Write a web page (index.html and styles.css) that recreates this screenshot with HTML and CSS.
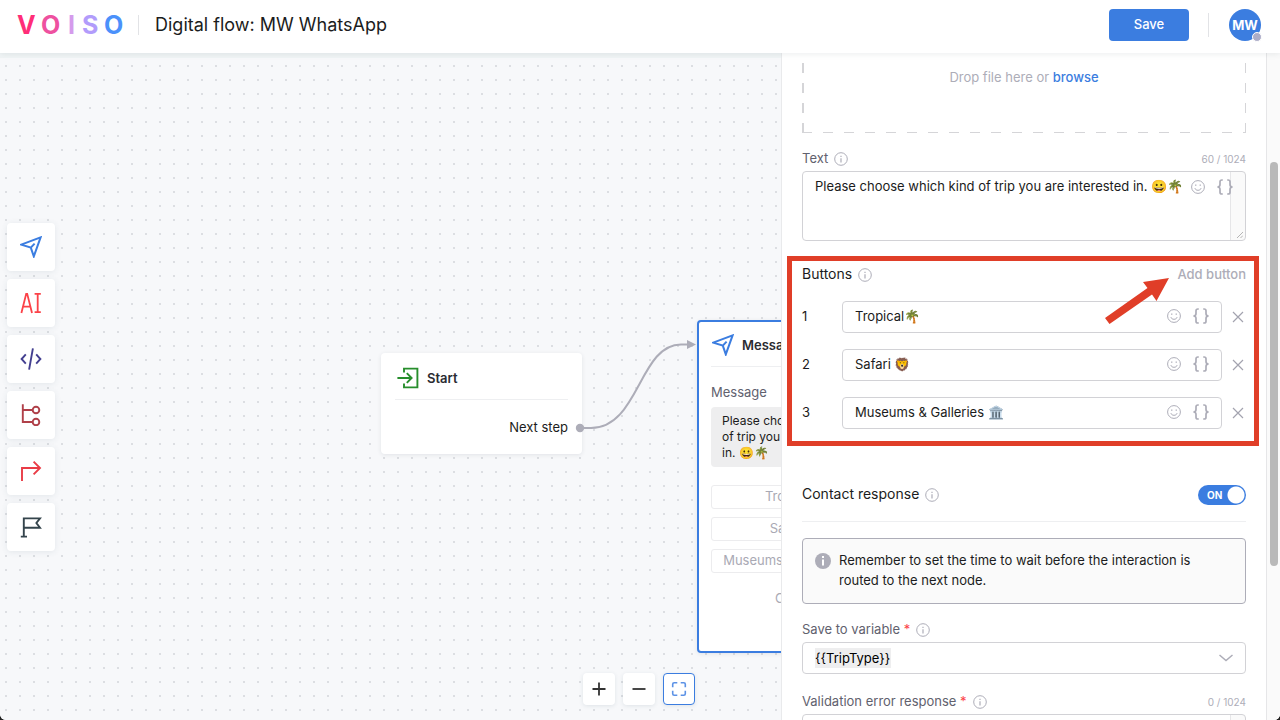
FILE: index.html
```html
<!DOCTYPE html>
<html lang="en">
<head>
<meta charset="utf-8">
<title>Digital flow: MW WhatsApp</title>
<link rel="stylesheet" href="styles.css">
</head>
<body>
<svg class="defs" aria-hidden="true">
  <symbol id="plane" viewBox="0 0 22 22"><path d="M1.2 8.6 20.6 1.4 13.8 20.4 10.8 11.6Z M10.8 11.6 14.6 7.6" fill="none" stroke="#3b7de0" stroke-width="2"/></symbol>
  <symbol id="info" viewBox="0 0 14 14"><circle cx="7" cy="7" r="6.3" fill="none" stroke="#adadb8"/><path d="M7 6.2V10.4M7 3.8V5" stroke="#adadb8" stroke-width="1.2"/></symbol>
  <symbol id="smile" viewBox="0 0 14 14"><g fill="none" stroke="#adadb8"><circle cx="7" cy="7" r="6.4"/><path d="M3.9 8.2C4.6 11 9.4 11 10.1 8.2M4.8 4.4V6M9.2 4.4V6"/></g></symbol>
  <symbol id="braces" viewBox="0 0 16 16"><path d="M5.8 1H4.9Q3 1 3 2.8V5.6Q3 8 .4 8Q3 8 3 10.400V13.200Q3 15 4.900 15H5.800M10.200 1H11.100Q13 1 13 2.800V5.600Q13 8 15.600 8Q13 8 13 10.400V13.200Q13 15 11.100 15H10.200" fill="none" stroke="#adadb8" stroke-width="1.7"/></symbol>
  <symbol id="cross" viewBox="0 0 12 12"><path d="M1 1 11 11M11 1 1 11" stroke="#a3a3af" stroke-width="1.2"/></symbol>
</svg>
<div class="app">
  <header class="topbar">
    <svg class="logo" viewBox="0 0 108 32" role="img" aria-label="Voiso">
      <text class="logo-text" y="25"><tspan x="0" fill="#ff2e78">V</tspan><tspan x="24" fill="#ee51a0">O</tspan><tspan x="51" fill="#d59bec">I</tspan><tspan x="65" fill="#b29cfb">S</tspan><tspan x="87" fill="#4b91fb">O</tspan></text>
    </svg>
    <h1 class="title">Digital flow: MW WhatsApp</h1>
    <button class="save" type="button">Save</button>
    <div class="account"><div class="avatar">MW<span class="status"></span></div></div>
  </header>
  <main class="work">
    <section class="canvas" aria-label="Flow">
      <nav class="tools">
        <button class="tool" type="button" aria-label="Message"><svg width="22" height="22"><use href="#plane"/></svg></button>
        <button class="tool" type="button" aria-label="AI"><svg width="22" height="22" viewBox="0 0 22 22" fill="none" stroke="#fb4248" stroke-width="1.8"><path d="M1.4 21 6.2 1.8H7.2L12 21M3 14.6H10.4M14.6 1.8H20.8M14.6 20.2H20.8M17.7 1.8V20.2"/></svg></button>
        <button class="tool" type="button" aria-label="Code"><svg width="22" height="22" viewBox="0 0 22 22" fill="none" stroke="#433f90" stroke-width="1.9"><path d="M5.8 6.4 1.6 11 5.8 15.6M16.2 6.4 20.4 11 16.2 15.6M12.9 .4 9.1 21.6"/></svg></button>
        <button class="tool" type="button" aria-label="Branch"><svg width="22" height="22" viewBox="0 0 22 22" fill="none" stroke="#b04049" stroke-width="1.9"><path d="M2.8 .2V18H12.6M2.8 6H12.6"/><circle cx="16" cy="6" r="3.3"/><circle cx="16" cy="18" r="3.3"/></svg></button>
        <button class="tool" type="button" aria-label="Redirect"><svg width="22" height="22" viewBox="0 0 22 22" fill="none" stroke="#e93c46" stroke-width="1.9"><path d="M2 21V8H20M13.6 1.6 20 8 13.6 14.4"/></svg></button>
        <button class="tool" type="button" aria-label="End"><svg width="22" height="22" viewBox="0 0 22 22" fill="none" stroke="#34444c" stroke-width="1.9"><path d="M.8 20.6H7M3.8 20.6V2.4H20L16.4 7 20 11.8H3.8"/></svg></button>
      </nav>
      <article class="node start">
        <h2 class="node-title"><svg width="22" height="22" viewBox="0 0 22 22" fill="none" stroke="#278e2c" stroke-width="1.9"><path d="M7 5.6V1.6H20.4V20.4H7V16.4M.4 11H14.6M9.8 6.2 14.6 11 9.8 15.8"/></svg>Start</h2>
        <p class="next">Next step</p>
      </article>
      <svg class="edge" width="124" height="98" viewBox="0 0 124 98"><circle cx="7" cy="89" r="4.2" fill="#adadb8"/><path d="M7 89H18C66 89 66 5.500 108 5.500H116" fill="none" stroke="#adadb8" stroke-width="2"/><path d="M114 1 123 5.500 114 10Z" fill="#adadb8"/></svg>
      <article class="node message">
        <h2 class="node-title"><svg width="22" height="22"><use href="#plane"/></svg>Message</h2>
        <p class="caption">Message</p>
        <p class="bubble">Please choose which kind<br>of trip you are interested<br>in. 😀🌴</p>
        <div class="options"><span class="option">Tropical🌴</span><span class="option">Safari 🦁</span><span class="option">Museums &amp; Galleries 🏛️</span></div>
        <p class="reply">Contact response</p>
      </article>
      <div class="zoom">
        <button class="zoom-btn" type="button" aria-label="Zoom in"><svg width="14" height="14" viewBox="0 0 14 14" stroke="#333" stroke-width="1.8"><path d="M7 .5V13.500M.5 7H13.500"/></svg></button>
        <button class="zoom-btn" type="button" aria-label="Zoom out"><svg width="14" height="14" viewBox="0 0 14 14" stroke="#333" stroke-width="1.8"><path d="M.5 7H13.500"/></svg></button>
        <button class="zoom-btn fit" type="button" aria-label="Fit"><svg width="16" height="16" viewBox="0 0 16 16" fill="none" stroke="#5c92e6" stroke-width="1.6"><path d="M1.700 6.300V3.200Q1.700 1.700 3.200 1.700H6.300M9.700 1.700H12.800Q14.300 1.700 14.300 3.200V6.300M14.300 9.700V12.800Q14.300 14.300 12.800 14.300H9.700M6.300 14.300H3.200Q1.700 14.300 1.700 12.800V9.700"/></svg></button>
      </div>
    </section>
    <aside class="panel">
      <form class="form">
        <div class="drop">Drop file here or <a class="browse" href="#">browse</a></div>
        <div class="label-row"><label for="text">Text</label><svg class="info"><use href="#info"/></svg><span class="count">60 / 1024</span></div>
        <div class="area"><textarea id="text">Please choose which kind of trip you are interested in. 😀🌴</textarea><span class="area-tools"><svg width="14" height="14"><use href="#smile"/></svg><svg width="16" height="16"><use href="#braces"/></svg></span><svg class="grip" width="6" height="6" viewBox="0 0 6 6"><path d="M0 6 6 0M3.500 6 6 3.500" stroke="#b5b5b5"/></svg></div>
        <section class="buttons">
          <div class="head"><h3>Buttons</h3><svg class="info"><use href="#info"/></svg><button class="add" type="button">Add button</button></div>
          <div class="button-row"><label for="b1">1</label><div class="field"><input id="b1" value="Tropical🌴"><svg width="14" height="14"><use href="#smile"/></svg><svg width="16" height="16"><use href="#braces"/></svg></div><button class="remove" type="button" aria-label="Remove 1"><svg width="12" height="12"><use href="#cross"/></svg></button></div>
          <div class="button-row"><label for="b2">2</label><div class="field"><input id="b2" value="Safari 🦁"><svg width="14" height="14"><use href="#smile"/></svg><svg width="16" height="16"><use href="#braces"/></svg></div><button class="remove" type="button" aria-label="Remove 2"><svg width="12" height="12"><use href="#cross"/></svg></button></div>
          <div class="button-row"><label for="b3">3</label><div class="field"><input id="b3" value="Museums &amp; Galleries 🏛️"><svg width="14" height="14"><use href="#smile"/></svg><svg width="16" height="16"><use href="#braces"/></svg></div><button class="remove" type="button" aria-label="Remove 3"><svg width="12" height="12"><use href="#cross"/></svg></button></div>
          <div class="highlight"></div>
          <svg class="pointer" width="66" height="48" viewBox="0 0 66 48"><path d="M64 0 38 4 42.500 10 0 40 4.500 46 47 16.500 51.500 23Z" fill="#e03e28"/></svg>
        </section>
        <div class="contact"><label for="contact">Contact response</label><svg class="info"><use href="#info"/></svg><span class="switch"><input id="contact" type="checkbox" role="switch" checked><span class="switch-text">ON</span></span></div>
        <div class="note"><svg width="16" height="16" viewBox="0 0 16 16"><circle cx="8" cy="8" r="8" fill="#adadb8"/><path d="M8 6.500V12.500M8 3V5" stroke="#fff" stroke-width="2"/></svg><p>Remember to set the time to wait before the interaction is routed to the next node.</p></div>
        <div class="label-row"><label for="variable">Save to variable <span class="req">*</span></label><svg class="info"><use href="#info"/></svg></div>
        <div class="select"><select id="variable"><option>{{TripType}}</option></select><svg width="14" height="8" viewBox="0 0 14 8"><path d="M.5 1 7 6.500 13.500 1" fill="none" stroke="#adadb8" stroke-width="1.5"/></svg></div>
        <div class="label-row"><label for="error">Validation error response <span class="req">*</span></label><svg class="info"><use href="#info"/></svg><span class="count">0 / 1024</span></div>
        <div class="area"><textarea id="error"></textarea></div>
      </form>
      <div class="track"><div class="thumb"></div></div>
    </aside>
  </main>
</div>
</body>
</html>
```
FILE: styles.css
```css
* { box-sizing: border-box; margin: 0; }
body { background: #222; color: #1b1c20; font: 13px/20px Inter, "Noto Sans", sans-serif; }
button, input, textarea, select { font: inherit; color: inherit; padding: 0; border: 0; background: none; }
svg { display: block; flex: none; }
.defs { position: absolute; width: 0; height: 0; }
.app { height: 100vh; display: flex; flex-direction: column; overflow: hidden; border-radius: 0 0 6px 6px; background: #fff; }

.topbar { position: relative; z-index: 1; flex: none; height: 53px; display: flex; align-items: center; padding: 0 19px 3px 17px; background: #fff; box-shadow: 0 1px 6px rgba(60, 80, 90, .1); }
.logo { width: 108px; height: 32px; overflow: visible; }
.logo-text { font: 700 25px Inter, sans-serif; }
.title { flex: 1; margin-left: 13px; padding-left: 16px; border-left: 1px solid #e2e3e6; font-size: 18px; font-weight: 400; line-height: 20px; }
.save { width: 80px; height: 32px; padding-bottom: 2px; border-radius: 4px; background: #3b7de0; color: #fff; font-weight: 500; }
.account { margin-left: 19px; padding-left: 20px; border-left: 1px solid #e2e3e6; height: 24px; display: flex; align-items: center; }
.avatar { position: relative; width: 32px; height: 32px; border-radius: 50%; background: #3b7de0; color: #fff; font-size: 13px; font-weight: 700; line-height: 32px; text-align: center; }
.status { position: absolute; right: -1px; bottom: -1px; width: 10px; height: 10px; border: 1px solid #fff; border-radius: 50%; background: #adadc8; }

.work { flex: 1; min-height: 0; display: flex; }
.canvas { flex: 1; position: relative; overflow: hidden; background: radial-gradient(circle, #dcdee2 1px, transparent 1px) -1px 6px / 14px 14px #f7f8fa; box-shadow: inset 0 5px 0 #f0f4f5; }
.tools { position: absolute; left: 7px; top: 170px; display: grid; gap: 8px; }
.tool { width: 48px; height: 48px; display: grid; place-items: center; border-radius: 4px; background: #fff; box-shadow: 0 1px 6px rgba(50, 80, 100, .1); }
.node { position: absolute; border-radius: 4px; background: #fff; box-shadow: 0 1px 4px rgba(40, 50, 70, .1); }
.start { left: 381px; top: 300px; width: 201px; height: 101px; padding: 5px 14px; }
.message { left: 697px; top: 267px; height: 333px; width: 201px; padding: 4px 12px; border: 2px solid #3b7de0; }
.node-title { display: flex; align-items: center; gap: 8px; height: 42px; padding: 0 0 2px 2px; border-bottom: 1px solid #eeeff1; font-size: 13px; font-weight: 600; color: #2a2b31; }
.message .node-title { height: 41px; padding-left: 1px; }
.next { margin-top: 17px; text-align: right; }
.edge { position: absolute; left: 573px; top: 286px; }
.caption { margin: 15px 0 5px; color: #61616e; }
.bubble { padding: 6px 11px; border-radius: 4px; background: #eeeeef; font-size: 12px; line-height: 16px; white-space: nowrap; }
.options { margin-top: 18px; display: grid; gap: 8px; }
.option { height: 24px; border: 1px solid #ececee; border-radius: 3px; color: #a9a9b4; line-height: 20px; text-align: center; white-space: nowrap; }
.reply { margin-top: 15px; color: #a9a9b4; text-align: right; }
.zoom { position: absolute; left: 583px; bottom: 15px; display: flex; gap: 8px; }
.zoom-btn { width: 32px; height: 32px; display: grid; place-items: center; border-radius: 4px; background: #fff; box-shadow: 0 1px 4px rgba(50, 80, 100, .12); }
.fit { border: 1px solid #3b7de0; }

.panel { flex: none; width: 499px; display: flex; overflow: hidden; border-left: 1px solid #e9eaec; background: #fff; }
.form { flex: 1; min-width: 0; padding: 0 20px; }
.drop { height: 80px; padding-top: 14px; color: #adadb8; text-align: center;
  background:
    linear-gradient(transparent 50%, #d5d5d8 50%) 0 0 / 2px 20px repeat-y,
    linear-gradient(transparent 50%, #d5d5d8 50%) 100% 0 / 1px 20px repeat-y,
    linear-gradient(90deg, #d5d5d8 10px, transparent 10px) 0 100% / 21px 1px repeat-x; }
.browse { color: #3b7de0; font-weight: 500; text-decoration: none; }
.label-row, .head, .contact { display: flex; align-items: center; }
.label-row { height: 20px; margin: 16px 0 2px; color: #61616e; }
.label-row label, .head h3, .add, .contact label, .button-row label { padding-bottom: 2px; }
.select + .label-row { margin-top: 18px; }
.info { width: 14px; height: 14px; margin-left: 6px; }
.count { margin-left: auto; color: #adadb8; font-size: 10px; }
.req { color: #fb4248; }
.area { position: relative; height: 70px; border: 1px solid #d2d2d6; border-radius: 4px; background: linear-gradient(#fafafa 0 0) 100% 0 / 14px 100% no-repeat; overflow: hidden; }
.area textarea { display: block; width: calc(100% - 14px); height: 100%; padding: 4px 48px 4px 12px; resize: none; border-right: 1px solid #e6e6e8; outline: 0; white-space: nowrap; overflow: hidden; }
.area-tools { position: absolute; top: 7px; right: 12px; display: flex; align-items: center; gap: 12px; }
.grip { position: absolute; right: 2px; bottom: 2px; }
.buttons { position: relative; display: grid; gap: 16px; margin-top: 23px; }
.head { height: 21px; }
.head h3 { font-size: 14px; font-weight: 400; }
.add { margin-left: auto; color: #adadb8; font-weight: 500; }
.button-row { display: flex; align-items: center; height: 32px; }
.button-row label { width: 40px; }
.field { flex: 1; height: 32px; display: flex; align-items: center; gap: 12px; padding: 0 12px 2px; border: 1px solid #d2d2d6; border-radius: 4px; }
.field input { flex: 1; min-width: 0; height: 20px; outline: 0; }
.remove { display: grid; place-items: center; width: 12px; height: 32px; margin: 0 2px 0 10px; }
.highlight { position: absolute; inset: -8px -13px -17px -15px; border: 5px solid #e03e28; pointer-events: none; }
.pointer { position: absolute; right: 75px; top: 14px; pointer-events: none; }
.contact { height: 37px; margin-top: 56px; padding-bottom: 16px; border-bottom: 1px solid #eeeff1; font-size: 14px; }
.switch { position: relative; width: 48px; height: 20px; margin-left: auto; }
.switch input { appearance: none; display: block; margin: 0; width: 48px; height: 20px; border-radius: 10px; background: radial-gradient(circle at 38px 10px, #fff 8px, transparent 9px) #3b7de0; }
.switch-text { position: absolute; left: 9px; top: 0; color: #fff; font-size: 10px; font-weight: 700; pointer-events: none; }
.note { display: flex; gap: 8px; margin-top: 16px; padding: 11px 12px 13px; border: 1px solid #adadb8; border-radius: 4px; background: #fafafa; }
.note svg { margin-top: 3px; }
.select { height: 32px; display: flex; align-items: center; border: 1px solid #d2d2d6; border-radius: 4px; padding: 0 12px; }
.select select { appearance: none; outline: 0; height: 20px; line-height: 20px; background: #eeeeef; color: #000; }
.select svg { margin-left: auto; }
.track { flex: none; width: 14px; border-left: 1px solid #e6e6e8; background: #fafafa; padding: 109px 2px 0 3px; }
.thumb { height: 404px; border-radius: 4px; background: #b9b9b9; }
```
